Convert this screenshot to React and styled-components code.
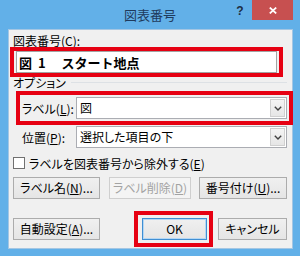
import React from "react";
import styled, { createGlobalStyle } from "styled-components";

const GlobalStyle = createGlobalStyle`
  html, body { margin: 0; padding: 0; }
  body {
    width: 300px;
    height: 256px;
    overflow: hidden;
    font-family: "Noto Sans CJK JP", "Noto Sans", sans-serif;
  }
  * { box-sizing: border-box; }
`;

const Window = styled.div`
  width: 300px;
  height: 256px;
  background: #62b0e8;
  display: flex;
  flex-direction: column;
`;

const TitleBar = styled.div`
  height: 29px;
  flex: none;
  display: grid;
  grid-template-columns: 1fr auto 1fr;
`;

const Title = styled.div`
  grid-column: 2;
  padding-top: 8px;
  font-size: 13px;
  line-height: 13px;
  color: #1f3a5c;
`;

const Controls = styled.div`
  grid-column: 3;
  display: flex;
  justify-content: flex-end;
  align-items: flex-start;
  padding-right: 7px;
`;

const Help = styled.div`
  width: 8px;
  height: 20px;
  margin-right: 8px;
  font-family: "Liberation Sans", Arial, sans-serif;
  font-weight: bold;
  font-size: 12px;
  line-height: 22px;
  text-align: center;
  color: #1d2d42;
`;

const Close = styled.div`
  width: 41px;
  height: 20px;
  background: #c75050;
  display: flex;
  align-items: center;
  justify-content: center;
`;

const Panel = styled.div`
  flex: none;
  height: 220px;
  margin: 0 7px 0 8px;
  background: #f0f0f0;
  border: 1px solid #a4c6e3;
  padding-top: 5px;
  display: flex;
  flex-direction: column;
  font-size: 12px;
  font-feature-settings: "palt";
  color: #000;
`;

const U = styled.span`
  text-decoration: underline;
  text-underline-offset: 1px;
`;

const FieldLabel = styled.div`
  margin-left: 4px;
  line-height: 12px;
  height: 12px;
  white-space: nowrap;
`;

const RedFrame = styled.div`
  border: 4px solid #e60012;
  display: flex;
  align-items: center;
`;

const CaptionFrame = styled(RedFrame)`
  margin-left: 1px;
  width: 273px;
  height: 30px;
  padding: 0 2px;
`;

const CaptionInput = styled.div`
  flex: 1;
  height: 22px;
  border: 1px solid #a3a3a3;
  background: #fff;
  padding-left: 2px;
  display: flex;
  align-items: center;
  font-size: 13px;
  font-weight: bold;
  line-height: 1;
  white-space: pre;
  font-feature-settings: normal;
`;

const GroupHeader = styled.div`
  display: flex;
  align-items: center;
  height: 12px;
  line-height: 12px;
  margin: 0 5px 0 4px;
  white-space: nowrap;
`;

const GroupLine = styled.div`
  flex: 1;
  margin: -2px 0 0 5px;
  border-top: 1px solid #dde1e5;
`;

const LabelFrame = styled(RedFrame)`
  margin: 2px -1px 0 7px;
  height: 34px;
  padding: 2px;
`;

const FieldRow = styled.div`
  display: flex;
  align-items: center;
  height: 22px;
  flex: ${(p) => (p.$inFrame ? 1 : "none")};
  margin: ${(p) => (p.$inFrame ? "0" : "1px 5px 0 13px")};
`;

const RowLabel = styled.div`
  width: 54px;
  flex: none;
  white-space: nowrap;
`;

const Combo = styled.div`
  flex: 1;
  height: 22px;
  border: 1px solid #abadb3;
  background: #fff;
  display: flex;
`;

const ComboText = styled.div`
  flex: 1;
  padding-left: 3px;
  line-height: 20px;
  white-space: nowrap;
`;

const ComboButton = styled.div`
  width: 15px;
  margin: 1px;
  border: 1px solid #d0d0d0;
  background: linear-gradient(#f4f4f4, #e6e6e6);
  display: flex;
  align-items: center;
  justify-content: center;
`;

const CheckRow = styled.div`
  display: flex;
  align-items: center;
  gap: 4px;
  height: 14px;
  margin: 8px 0 0 4px;
  white-space: nowrap;
`;

const CheckBox = styled.div`
  width: 12px;
  height: 12px;
  border: 1px solid #707070;
  background: #fff;
`;

const ButtonRow = styled.div`
  display: flex;
  align-items: center;
  height: ${(p) => p.$h}px;
  margin: ${(p) => p.$mt}px 0 0 4px;
`;

const Button = styled.button`
  width: ${(p) => p.$w}px;
  margin-left: ${(p) => p.$ml || 0}px;
  height: 22px;
  flex: none;
  padding: 0;
  border: 1px solid ${(p) => (p.$disabled ? "#cfcfcf" : p.$default ? "#3f8ed3" : "#acacac")};
  background: ${(p) =>
    p.$disabled ? "#f4f4f4" : "linear-gradient(#f0f0f0, #e5e5e5)"};
  box-shadow: ${(p) => (p.$default ? "inset 0 0 0 1px #b5d7f3" : "none")};
  color: ${(p) => (p.$disabled ? "#a3a3a3" : "#000")};
  font: inherit;
  font-size: 12px;
  line-height: 20px;
  font-feature-settings: "palt";
  white-space: nowrap;
`;

const OkFrame = styled(RedFrame)`
  margin-left: 34px;
  padding: 2px 2px 2px 4px;
  height: 36px;
`;

const Chevron = () => (
  <svg width="8" height="5" viewBox="0 0 8 5">
    <polyline points="0.8,0.8 4,4 7.2,0.8" fill="none" stroke="#404040" strokeWidth="1.4" />
  </svg>
);

const CloseIcon = () => (
  <svg width="8" height="7" viewBox="0 0 8 7">
    <path d="M0.8 0.6 L7.2 6.4 M7.2 0.6 L0.8 6.4" stroke="#fff" strokeWidth="1.8" />
  </svg>
);

export default function App() {
  return (
    <>
      <GlobalStyle />
      <Window>
        <TitleBar>
          <Title>図表番号</Title>
          <Controls>
            <Help>?</Help>
            <Close>
              <CloseIcon />
            </Close>
          </Controls>
        </TitleBar>
        <Panel>
          <FieldLabel>
            図表番号(<U>C</U>):
          </FieldLabel>
          <CaptionFrame>
            <CaptionInput>{"図  1　 スタート地点"}</CaptionInput>
          </CaptionFrame>
          <GroupHeader>
            オプション
            <GroupLine />
          </GroupHeader>
          <LabelFrame>
            <FieldRow $inFrame>
              <RowLabel>
                ラベル(<U>L</U>):
              </RowLabel>
              <Combo>
                <ComboText>図</ComboText>
                <ComboButton>
                  <Chevron />
                </ComboButton>
              </Combo>
            </FieldRow>
          </LabelFrame>
          <FieldRow>
            <RowLabel>
              位置(<U>P</U>):
            </RowLabel>
            <Combo>
              <ComboText>選択した項目の下</ComboText>
              <ComboButton>
                <Chevron />
              </ComboButton>
            </Combo>
          </FieldRow>
          <CheckRow>
            <CheckBox />
            <span>
              ラベルを図表番号から除外する(<U>E</U>)
            </span>
          </CheckRow>
          <ButtonRow $h={22} $mt={7}>
            <Button $w={87}>
              ラベル名(<U>N</U>)...
            </Button>
            <Button $w={82} $ml={9} $disabled>
              ラベル削除(<U>D</U>)
            </Button>
            <Button $w={88} $ml={8}>
              番号付け(<U>U</U>)...
            </Button>
          </ButtonRow>
          <ButtonRow $h={36} $mt={12}>
            <Button $w={87}>
              自動設定(<U>A</U>)...
            </Button>
            <OkFrame>
              <Button $w={65} $default>
                OK
              </Button>
            </OkFrame>
            <Button $w={69} $ml={5}>
              キャンセル
            </Button>
          </ButtonRow>
        </Panel>
      </Window>
    </>
  );
}
